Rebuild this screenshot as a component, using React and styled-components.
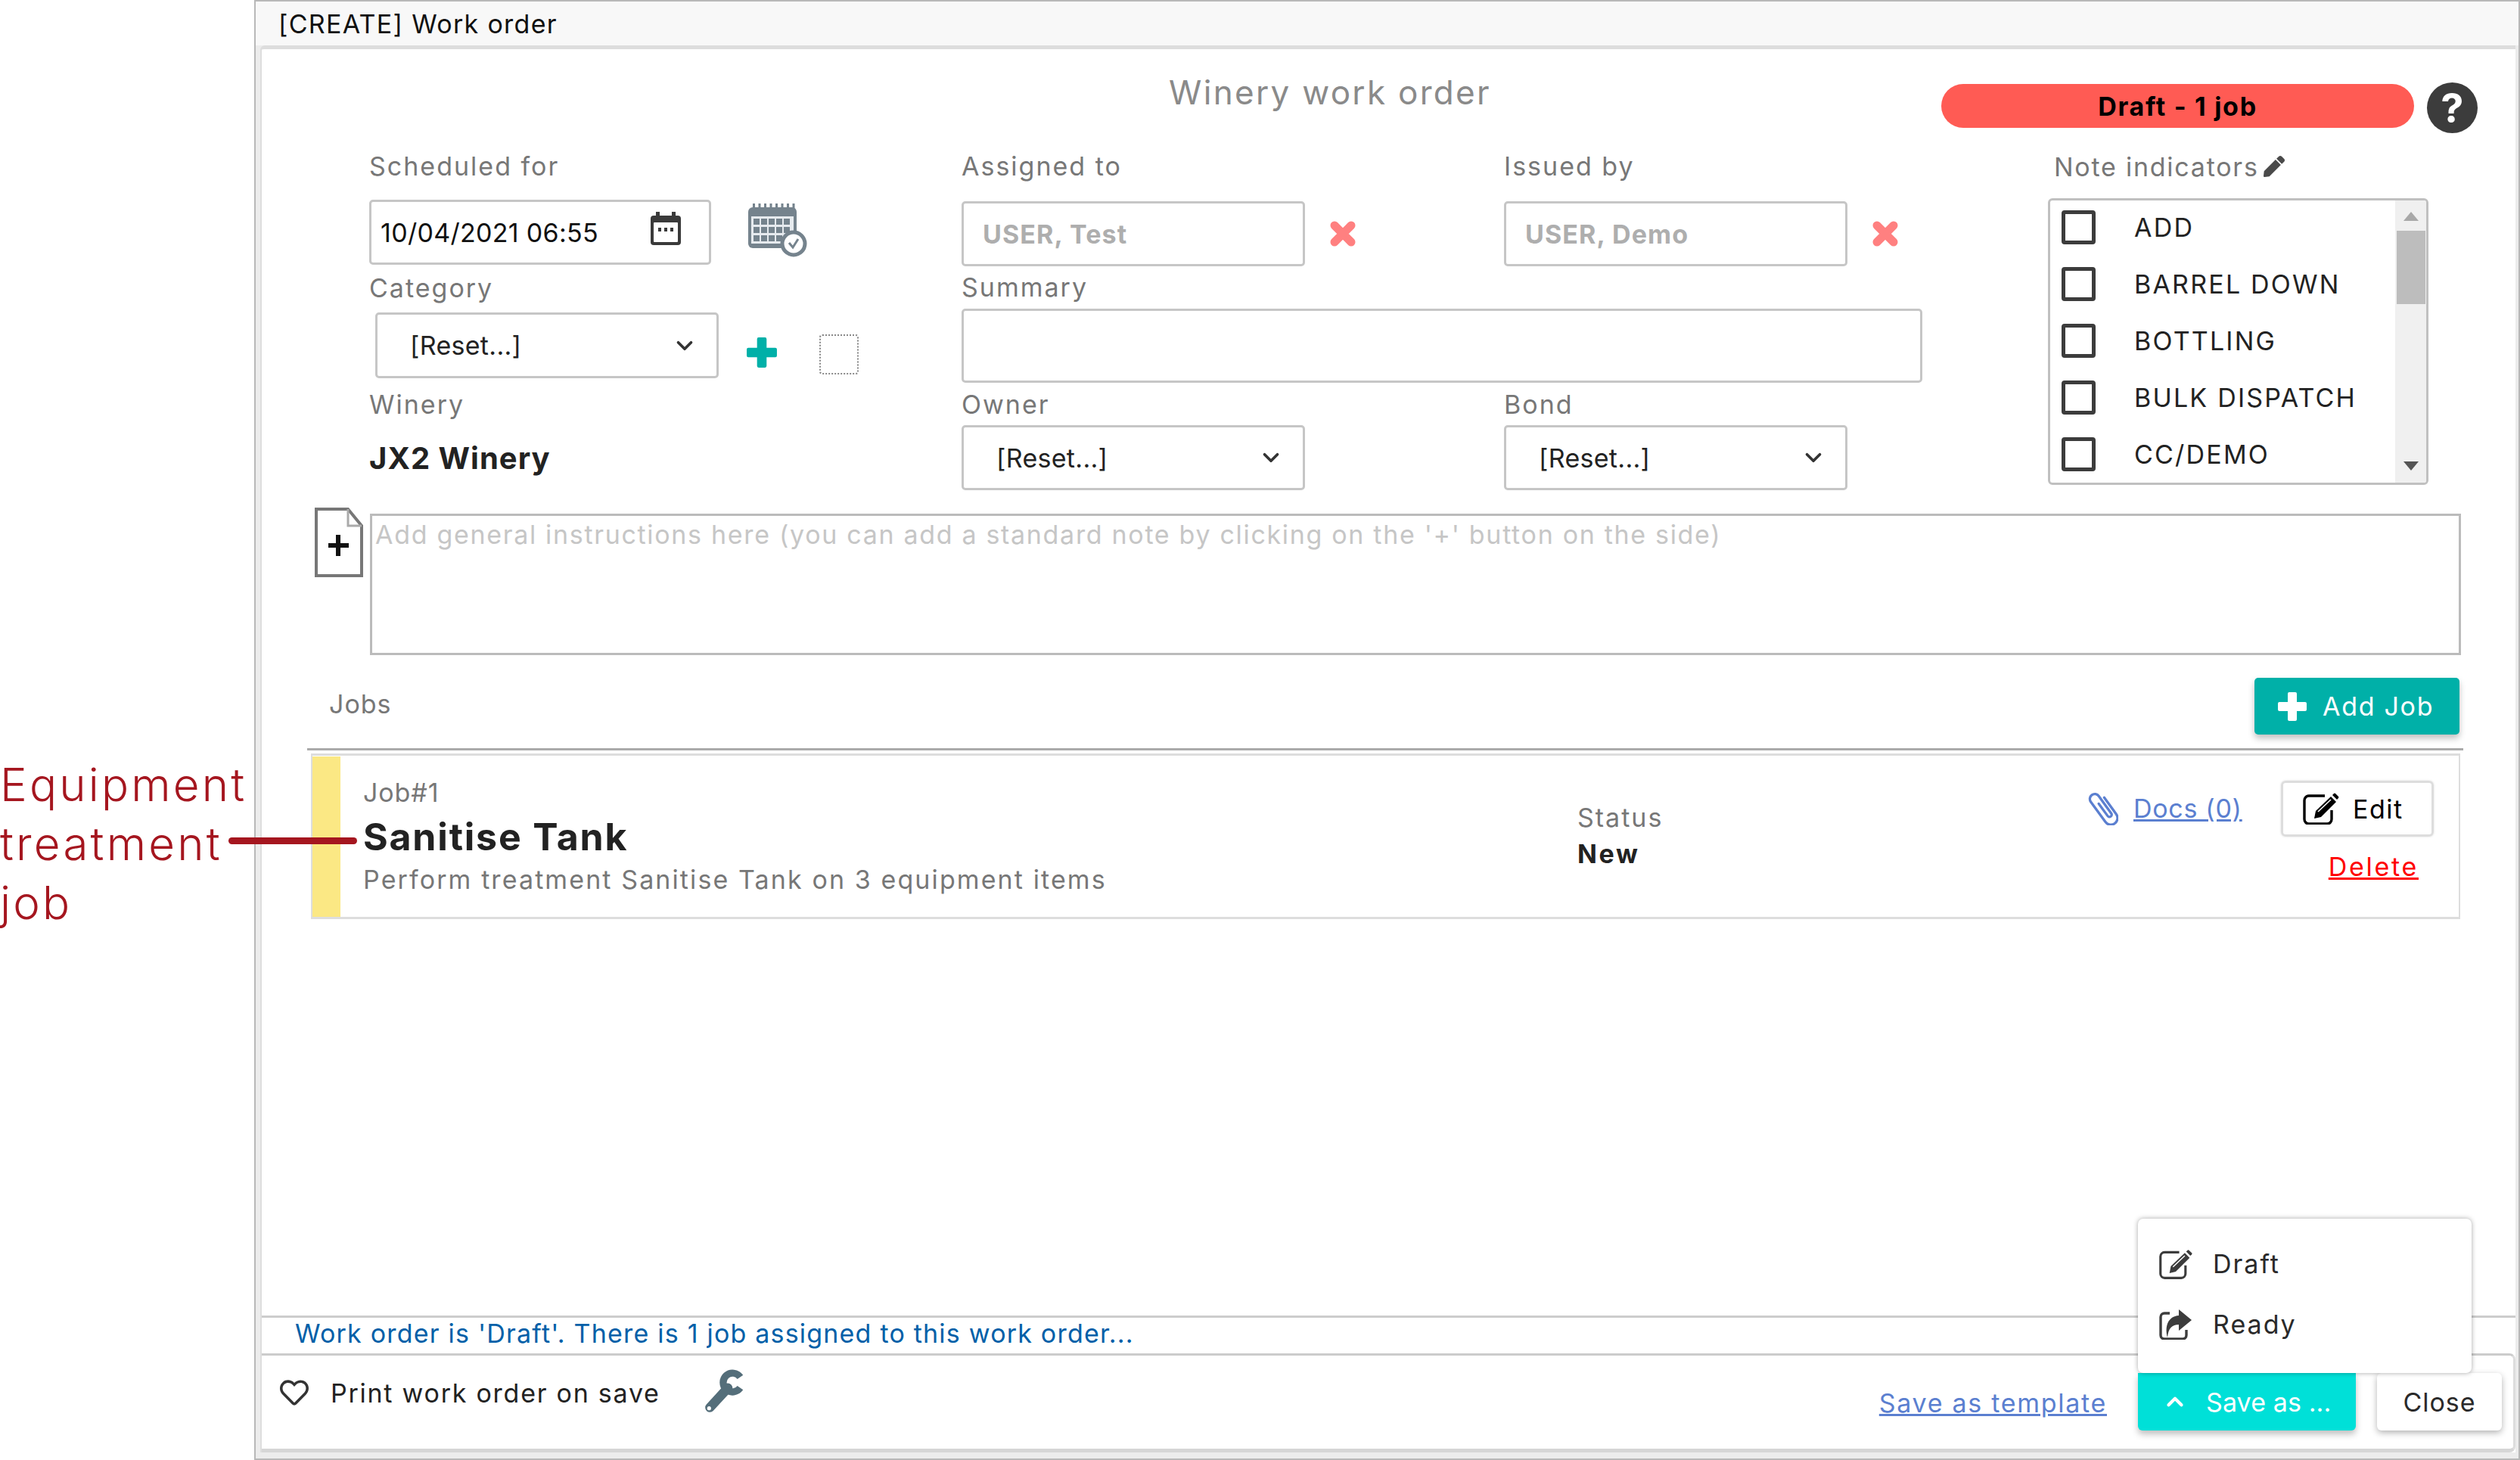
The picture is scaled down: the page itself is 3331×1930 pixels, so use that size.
import React from 'react';
import styled, { createGlobalStyle } from 'styled-components';
import { FaPen, FaRegHeart } from 'react-icons/fa';
import { LuChevronDown, LuChevronUp } from 'react-icons/lu';

const Global = createGlobalStyle`
  html, body { margin: 0; padding: 0; background: #fff; }
  body { font-family: Inter, "Open Sans", sans-serif; font-size: 34px; letter-spacing: 0.3px; color: #222; }
  * { box-sizing: border-box; }
`;

const Page = styled.div`
  width: 3331px; height: 1930px; display: flex; position: relative; overflow: hidden; background: #fff;
`;
const AnnotationText = styled.div`
  width: 336px; flex: none; padding-top: 998px; font-size: 60px; line-height: 78px; font-weight: 300; color: #a5161f; letter-spacing: 3.2px;
`;
const AnnotationLine = styled.div`
  position: absolute; z-index: 2; left: 302px; top: 1107px; width: 170px; height: 9px; border-radius: 5px; background: #a5161f;
`;
const Window = styled.div`
  flex: 1; display: flex; flex-direction: column; height: 1930px; background: #ececec;
  border: 2px solid #b8b8b8;
`;
const WindowBar = styled.div`
  height: 58px; flex: none; padding-left: 30px; display: flex; align-items: center; background: #f8f8f8; color: #111; letter-spacing: 1.3px;
`;
const Panel = styled.div`
  flex: 1; display: flex; flex-direction: column; margin-left: 6px; margin-right: 4px; background: #fff;
  border-top: 5px solid #ddd; border-left: 2px solid #ddd; border-top-left-radius: 6px;
`;
const TitleRow = styled.div`
  height: 135px; flex: none; display: flex; align-items: flex-start; padding-left: 1199px;
`;
const Title = styled.div`
  width: 426px; margin-top: 32px; text-align: center; font-size: 44px; line-height: 50px; color: #8a8a8a; white-space: nowrap; letter-spacing: 2.3px;
`;
const Pill = styled.div`
  width: 625px; height: 58px; margin-top: 46px; margin-left: 595px; border-radius: 29px; background: #ff5b54;
  display: flex; align-items: center; justify-content: center; font-weight: 700; color: #000; letter-spacing: 1.7px;
`;
const Help = styled.div`
  width: 67px; height: 67px; margin-top: 44px; margin-left: 17px; border-radius: 50%; background: #3c3c3c; color: #fff;
  display: flex; align-items: center; justify-content: center; font-size: 54px; font-weight: 700;
`;
const FormRow = styled.div`
  display: flex; flex: none; padding-left: 142px;
`;
const LeftCol = styled.div`
  width: 783px; flex: none; display: flex; flex-direction: column;
`;
const MidCol = styled.div`
  width: 1436px; flex: none; display: flex; flex-direction: column;
`;
const RightCol = styled.div`
  width: 503px; flex: none; display: flex; flex-direction: column;
`;
const Label = styled.div`
  height: 40px; line-height: 40px; color: #777; white-space: nowrap; letter-spacing: 2px; margin-top: ${p => p.$top || 0}px;
`;
const Line = styled.div`
  display: flex; align-items: center; margin-top: ${p => p.$top || 0}px; margin-left: ${p => p.$left || 0}px;
`;
const Split = styled.div`
  display: flex; margin-top: ${p => p.$top || 0}px;
`;
const Field = styled.div`
  width: ${p => p.$w}px; flex: none; display: flex; flex-direction: column;
`;
const Box = styled.div`
  width: ${p => p.$w}px; height: ${p => p.$h || 86}px; flex: none; border: 3px solid #c6c6c6; border-radius: 5px; background: #fff;
  display: flex; align-items: center; position: relative; white-space: nowrap;
  margin-top: ${p => p.$top || 0}px;
  padding-left: ${p => p.$pad || 0}px; color: ${p => p.$color || '#222'}; font-weight: ${p => p.$bold ? 700 : 400};
  letter-spacing: ${p => p.$bold ? '1.1px' : '0.3px'};
`;
const Chevron = styled(LuChevronDown)`
  position: absolute; right: 25px; top: 50%; margin-top: -17px; width: 34px; height: 34px; color: #333; stroke-width: 2.6;
`;
const ClearGlyph = styled.svg`
  width: 36px; height: 34px; flex: none; margin-left: 32px;
`;
const SmallCal = styled.svg`
  position: absolute; right: 37px; top: 13px; width: 40px; height: 44px;
`;
const BigCal = styled.svg`
  width: 80px; height: 72px; margin-left: 47px; margin-top: -6px; flex: none;
`;
const PlusGlyph = styled.svg`
  width: ${p => p.$size}px; height: ${p => p.$size}px; flex: none; color: ${p => p.$color};
  margin-left: ${p => p.$left || 0}px; margin-top: ${p => p.$top || 0}px;
`;
const DottedBox = styled.div`
  width: 52px; height: 53px; margin-left: 55px; margin-top: 24px; flex: none; border: 2px dotted #888; border-radius: 4px;
`;
const StrongValue = styled.div`
  margin-top: 26px; height: 50px; line-height: 50px; font-size: 40px; font-weight: 700; color: #222; letter-spacing: 1px;
`;
const LabelPencil = styled(FaPen)`
  width: 28px; height: 28px; margin-left: 6px; color: #4a4a4a; flex: none;
`;
const NoteLabel = styled.div`
  display: flex; align-items: center; height: 40px; padding-left: 8px; color: #777; letter-spacing: 1.75px;
`;
const ListBox = styled.div`
  margin-top: 22px; width: 503px; height: 379px; border: 3px solid #c0c0c0; border-radius: 6px; display: flex; overflow: hidden;
`;
const ListItems = styled.div`
  flex: 1; display: flex; flex-direction: column; padding: 13px 0 0 15px;
`;
const ListRow = styled.div`
  height: 75px; flex: none; display: flex; align-items: flex-start; color: #222;
`;
const CheckBox = styled.div`
  width: 45px; height: 45px; flex: none; border: 5px solid #3c3c3c; border-radius: 4px;
`;
const ListText = styled.div`
  margin-left: 51px; line-height: 45px; white-space: nowrap; letter-spacing: 2.2px;
`;
const Scrollbar = styled.div`
  width: 41px; flex: none; background: #f0f0f0; display: flex; flex-direction: column; align-items: center;
`;
const ScrollArrow = styled.div`
  width: 0; height: 0; flex: none; border-left: 10px solid transparent; border-right: 10px solid transparent;
  ${p => p.$down ? 'border-top: 12px solid #555; margin-top: auto; margin-bottom: 16px;' : 'border-bottom: 12px solid #a8a8a8; margin-top: 15px;'}
`;
const ScrollThumb = styled.div`
  width: 38px; height: 97px; margin-top: 13px; background: #bdbdbd;
`;
const NotesRow = styled.div`
  flex: none; display: flex; margin-top: 23px; padding-left: 70px;
`;
const NoteIcon = styled.svg`
  width: 64px; height: 92px; flex: none;
`;
const NotesBox = styled.div`
  width: 2764px; height: 187px; margin-left: 9px; margin-top: 8px; flex: none; border: 3px solid #bbb; padding: 4px 4px 0;
  font-size: 34px; line-height: 42px; color: #c6c6c6; white-space: nowrap; letter-spacing: 1.68px;
`;
const JobsHeader = styled.div`
  flex: none; width: 2850px; margin-left: 60px; height: 126px; padding: 30px 5px 0 29px; display: flex; justify-content: space-between;
  border-bottom: 3px solid #aaa;
`;
const JobsTitle = styled.div`
  color: #777; line-height: 70px; letter-spacing: 1px;
`;
const AddJob = styled.div`
  width: 271px; height: 75px; background: #00b0a8; border-radius: 5px; color: #fff; display: flex; align-items: center; padding-left: 30px; gap: 20px;
  box-shadow: 0 5px 8px rgba(0,0,0,.25); letter-spacing: 1.7px;
`;
const JobCard = styled.div`
  flex: none; width: 2841px; height: 219px; margin: 4px 0 0 65px; border: 2px solid #ddd; border-top-width: 3px; border-bottom-width: 3px; display: flex; padding: 1px 33px 0 0;
`;
const JobStripe = styled.div`
  width: 37px; flex: none; background: #fbe884;
`;
const JobMain = styled.div`
  width: 1605px; margin-left: 30px; flex: none; display: flex; flex-direction: column; padding-top: 28px;
`;
const JobNum = styled.div`
  line-height: 40px; color: #777; height: 40px; letter-spacing: 0.9px;
`;
const JobName = styled.div`
  line-height: 60px; height: 60px; margin-top: 8px; font-size: 50px; font-weight: 700; color: #222; letter-spacing: 1.8px;
`;
const JobDesc = styled.div`
  line-height: 40px; margin-top: 7px; color: #777; letter-spacing: 2.1px;
`;
const JobStatus = styled.div`
  width: 675px; flex: none; display: flex; flex-direction: column; padding-top: 61px;
`;
const StatusLabel = styled.div`
  line-height: 40px; color: #777; letter-spacing: 2px;
`;
const StatusValue = styled.div`
  line-height: 40px; margin-top: 8px; font-weight: 700; color: #222; letter-spacing: 2.6px;
`;
const DocsLink = styled.a`
  width: 255px; flex: none; margin-top: 47px; display: flex; align-items: flex-start; gap: 20px; color: #5b7fd0; white-space: nowrap;
  & span { line-height: 44px; text-decoration: underline; letter-spacing: 0.7px; }
  & svg { width: 40px; height: 44px; flex: none; }
`;
const JobActions = styled.div`
  flex: 1; display: flex; flex-direction: column; align-items: stretch; padding-top: 32px;
`;
const EditBtn = styled.div`
  height: 74px; border: 3px solid #ddd; border-radius: 6px; display: flex; align-items: center; padding-left: 25px; gap: 18px; color: #000; letter-spacing: 1.5px;
  box-shadow: 0 0 3px rgba(0,0,0,.12);
  & svg { width: 49px; height: 42px; flex: none; }
`;
const DeleteLink = styled.a`
  margin-top: 20px; margin-right: 20px; text-align: right; line-height: 40px; color: #f00; text-decoration: underline; letter-spacing: 2.7px;
`;
const Spacer = styled.div`
  flex: 1;
`;
const StatusBar = styled.div`
  flex: none; height: 50px; border-top: 3px solid #ccc; padding: 0 0 6px 44px; display: flex; align-items: center; color: #0060a8; letter-spacing: 1.2px;
`;
const Footer = styled.div`
  flex: none; height: 131px; border-top: 3px solid #ccc; border-bottom: 5px solid #d6d6d6; border-right: 3px solid #ddd; border-bottom-right-radius: 8px; border-top-right-radius: 8px;
  display: flex; align-items: flex-start; padding: 0 15px 0 22px; background: #fff; color: #222;
`;
const HeartIcon = styled(FaRegHeart)`
  width: 42px; height: 38px; margin-top: 30px; color: #333; flex: none;
`;
const PrintText = styled.div`
  margin-left: 27px; line-height: 40px; margin-top: 30px; white-space: nowrap; letter-spacing: 1.75px;
`;
const Wrench = styled.svg`
  width: 62px; height: 62px; margin-top: 18px; margin-left: 54px; flex: none;
`;
const SaveTemplate = styled.a`
  margin-left: auto; margin-top: 43px; color: #5b7fd0; text-decoration: underline; white-space: nowrap; line-height: 40px; letter-spacing: 1.7px;
`;
const SaveWrap = styled.div`
  margin-left: 41px; margin-top: 23px; position: relative; width: 288px; flex: none;
`;
const SaveBtn = styled.div`
  height: 76px; background: #00e0d8; color: #fff; border-radius: 0 0 6px 6px; display: flex; align-items: center; padding-left: 32px; gap: 24px;
  box-shadow: 0 5px 8px rgba(0,0,0,.25); letter-spacing: 0.1px;
  & svg { width: 34px; height: 34px; flex: none; stroke-width: 3; }
`;
const Menu = styled.div`
  position: absolute; left: 0; bottom: 76px; width: 441px; height: 204px; background: #fff; border-radius: 7px;
  box-shadow: 0 0 6px rgba(0,0,0,.35); display: flex; flex-direction: column; padding: 39px 0 0 27px; gap: 39px;
`;
const MenuItem = styled.div`
  display: flex; align-items: center; height: 41px; gap: 27px; color: #2a2a2a; letter-spacing: 2px;
  & svg { width: 45px; height: 40px; flex: none; color: #3c3c3c; }
`;
const CloseBtn = styled.div`
  width: 165px; height: 76px; margin-left: 28px; margin-top: 23px; flex: none; border-radius: 6px; background: #fff; color: #2a2a2a;
  display: flex; align-items: center; justify-content: center; box-shadow: 0 3px 8px rgba(0,0,0,.3); letter-spacing: 1px;
`;
const BottomBand = styled.div`
  height: 8px; flex: none;
`;

const Select = ({ w, h, children }) => (
  <Box $w={w} $h={h} $pad={43}>
    {children}
    <Chevron />
  </Box>
);

const ClearIcon = () => (
  <ClearGlyph viewBox="0 0 36 34">
    <path d="M7 6l22 22M29 6L7 28" stroke="#ff8080" strokeWidth="11" strokeLinecap="round" />
  </ClearGlyph>
);

const ThickPlus = ({ size, color, left, top }) => (
  <PlusGlyph $size={size} $color={color} $left={left} $top={top} viewBox="0 0 40 40">
    <path d="M14 3a2 2 0 0 1 2-2h8a2 2 0 0 1 2 2v11h11a2 2 0 0 1 2 2v8a2 2 0 0 1-2 2H26v11a2 2 0 0 1-2 2h-8a2 2 0 0 1-2-2V26H3a2 2 0 0 1-2-2v-8a2 2 0 0 1 2-2h11z" fill="currentColor" />
  </PlusGlyph>
);

const EditIcon = () => (
  <svg viewBox="0 0 49 42">
    <path d="M30 4H9a6 6 0 0 0-6 6v25a6 6 0 0 0 6 6h24a6 6 0 0 0 6-6V23" fill="none" stroke="currentColor" strokeWidth="3.4" />
    <path d="M18 24L38 5l7 7-20 20-9 2z" fill="currentColor" />
    <path d="M40 3l2-2a1.5 1.5 0 0 1 2 0l4 4a1.5 1.5 0 0 1 0 2l-2 2z" fill="currentColor" />
    <path d="M21 25l17-16" stroke="#fff" strokeWidth="1.6" />
  </svg>
);

const ShareIcon = () => (
  <svg viewBox="0 0 45 40">
    <path d="M15 5H8a5 5 0 0 0-5 5v24a5 5 0 0 0 5 5h24a5 5 0 0 0 5-5v-7" fill="none" stroke="currentColor" strokeWidth="3.4" />
    <path d="M27 0l17 14-17 14v-8c-9 0-14 5-15 17C8 22 13 9 27 8z" fill="currentColor" />
  </svg>
);

const ClipIcon = () => (
  <svg viewBox="3 4 34 37">
    <g transform="rotate(-36 20 22)">
      <path d="M28 13v23a7.5 7.5 0 0 1-15 0V8a5.5 5.5 0 0 1 11 0v24a2.5 2.5 0 0 1-5 0V15" fill="none" stroke="#5b7fd0" strokeWidth="2.8" strokeLinecap="round" />
    </g>
  </svg>
);

const notes = ['ADD', 'BARREL DOWN', 'BOTTLING', 'BULK DISPATCH', 'CC/DEMO'];

export default function App() {
  return (
    <Page>
      <Global />
      <AnnotationText>Equipment<br />treatment<br />job</AnnotationText>
      <AnnotationLine />
      <Window>
        <WindowBar>[CREATE] Work order</WindowBar>
        <Panel>
          <TitleRow>
            <Title>Winery work order</Title>
            <Pill>Draft - 1 job</Pill>
            <Help>?</Help>
          </TitleRow>
          <FormRow>
            <LeftCol>
              <Label>Scheduled for</Label>
              <Line $top={24}>
                <Box $w={452} $pad={12} $color="#111">
                  10/04/2021 06:55
                  <SmallCal viewBox="0 0 40 44">
                    <path d="M4 5h32a4 4 0 0 1 4 4v31a4 4 0 0 1-4 4H4a4 4 0 0 1-4-4V9a4 4 0 0 1 4-4z" fill="#3a3a3a" />
                    <rect x="7" y="0" width="5" height="9" fill="#3a3a3a" />
                    <rect x="28" y="0" width="5" height="9" fill="#3a3a3a" />
                    <rect x="4" y="14" width="32" height="26" rx="1" fill="#fff" />
                    <rect x="10" y="21" width="4" height="5" fill="#3a3a3a" />
                    <rect x="18" y="21" width="4" height="5" fill="#3a3a3a" />
                    <rect x="26" y="21" width="4" height="5" fill="#3a3a3a" />
                  </SmallCal>
                </Box>
                <BigCal viewBox="0 0 80 72">
                  <rect x="2" y="6" width="64" height="54" rx="6" fill="#75838d" />
                  <rect x="6" y="18" width="56" height="36" fill="#e6eaee" />
                  {[0, 1, 2, 3, 4].map(c => [0, 1, 2].map(r => (
                    <rect key={`${c}${r}`} x={9 + c * 10} y={21 + r * 11} width="8" height="8" fill="#75838d" />
                  )))}
                  {[0, 1, 2, 3, 4, 5, 6, 7].map(i => (
                    <rect key={i} x={8 + i * 7.5} y="1" width="3" height="9" fill="#75838d" />
                  ))}
                  <circle cx="62" cy="54" r="15" fill="#fff" stroke="#75838d" strokeWidth="5" />
                  <path d="M56 53l5 6 7-11" fill="none" stroke="#75838d" strokeWidth="3" />
                </BigCal>
              </Line>
              <Label $top={11}>Category</Label>
              <Line $top={12} $left={8}>
                <Select w={454} h={87}>[Reset...]</Select>
                <ThickPlus size={42} color="#00b0a8" left={36} top={18} />
                <DottedBox />
              </Line>
              <Label $top={15}>Winery</Label>
              <StrongValue>JX2 Winery</StrongValue>
            </LeftCol>
            <MidCol>
              <Split>
                <Field $w={717}>
                  <Label>Assigned to</Label>
                  <Line $top={26}>
                    <Box $w={454} $pad={25} $color="#aeaeae" $bold>USER, Test</Box>
                    <ClearIcon />
                  </Line>
                </Field>
                <Field $w={700}>
                  <Label>Issued by</Label>
                  <Line $top={26}>
                    <Box $w={454} $pad={25} $color="#aeaeae" $bold>USER, Demo</Box>
                    <ClearIcon />
                  </Line>
                </Field>
              </Split>
              <Label $top={8}>Summary</Label>
              <Box $w={1270} $h={98} $top={8} />
              <Split $top={9}>
                <Field $w={717}>
                  <Label>Owner</Label>
                  <Line $top={7}><Select w={454}>[Reset...]</Select></Line>
                </Field>
                <Field $w={700}>
                  <Label>Bond</Label>
                  <Line $top={7}><Select w={454}>[Reset...]</Select></Line>
                </Field>
              </Split>
            </MidCol>
            <RightCol>
              <NoteLabel>Note indicators<LabelPencil /></NoteLabel>
              <ListBox>
                <ListItems>
                  {notes.map(n => (
                    <ListRow key={n}><CheckBox /><ListText>{n}</ListText></ListRow>
                  ))}
                </ListItems>
                <Scrollbar>
                  <ScrollArrow />
                  <ScrollThumb />
                  <ScrollArrow $down />
                </Scrollbar>
              </ListBox>
            </RightCol>
          </FormRow>
          <NotesRow>
            <NoteIcon viewBox="0 0 64 92">
              <path d="M2 2h42l18 22v66H2z" fill="#fff" stroke="#777" strokeWidth="4" />
              <path d="M44 2v22h18" fill="none" stroke="#aaa" strokeWidth="3" />
              <path d="M31 36v28M18 50h27" stroke="#111" strokeWidth="6" />
            </NoteIcon>
            <NotesBox>Add general instructions here (you can add a standard note by clicking on the '+' button on the side)</NotesBox>
          </NotesRow>
          <JobsHeader>
            <JobsTitle>Jobs</JobsTitle>
            <AddJob><ThickPlus size={40} color="#fff" />Add Job</AddJob>
          </JobsHeader>
          <JobCard>
            <JobStripe />
            <JobMain>
              <JobNum>Job#1</JobNum>
              <JobName>Sanitise Tank</JobName>
              <JobDesc>Perform treatment Sanitise Tank on 3 equipment items</JobDesc>
            </JobMain>
            <JobStatus>
              <StatusLabel>Status</StatusLabel>
              <StatusValue>New</StatusValue>
            </JobStatus>
            <DocsLink><ClipIcon /><span>Docs (0)</span></DocsLink>
            <JobActions>
              <EditBtn><EditIcon />Edit</EditBtn>
              <DeleteLink>Delete</DeleteLink>
            </JobActions>
          </JobCard>
          <Spacer />
          <StatusBar>Work order is 'Draft'. There is 1 job assigned to this work order...</StatusBar>
          <Footer>
            <HeartIcon />
            <PrintText>Print work order on save</PrintText>
            <Wrench viewBox="0 0 60 60">
              <path d="M11 49L34 24" stroke="#546e7a" strokeWidth="12" strokeLinecap="round" />
              <path d="M49.8 10.1A12 12 0 1 0 49.8 23.9" fill="none" stroke="#546e7a" strokeWidth="9" />
              <circle cx="10" cy="50" r="2.5" fill="#fff" />
            </Wrench>
            <SaveTemplate>Save as template</SaveTemplate>
            <SaveWrap>
              <Menu>
                <MenuItem><EditIcon />Draft</MenuItem>
                <MenuItem><ShareIcon />Ready</MenuItem>
              </Menu>
              <SaveBtn><LuChevronUp />Save as ...</SaveBtn>
            </SaveWrap>
            <CloseBtn>Close</CloseBtn>
          </Footer>
        </Panel>
        <BottomBand />
      </Window>
    </Page>
  );
}
